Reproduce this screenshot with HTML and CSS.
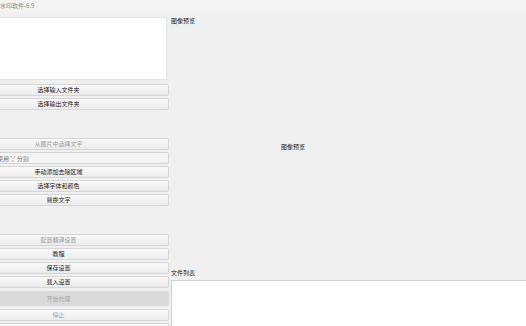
FILE: index.html
```html
<!DOCTYPE html>
<html lang="zh">
<head>
  <meta charset="UTF-8" />
  <title>水印软件-6.9</title>
  <link rel="stylesheet" href="styles.css">
</head>
<body>

  <div id="titlebar">水印软件-6.9</div>

  <div id="main">
    <!-- Left controls -->
    <aside id="controls">
      <div class="log-box"></div>

      <button class="btn first">选择输入文件夹</button>
      <button class="btn">选择输出文件夹</button>

      <button class="btn disabled group">从图片中选择文字</button>
      <input class="field" type="text" value="使用 ';' 分割" />
      <button class="btn">手动添加去除区域</button>
      <button class="btn">选择字体和颜色</button>
      <button class="btn">替换文字</button>

      <button class="btn disabled group">配置翻译设置</button>
      <button class="btn">教程</button>
      <button class="btn">保存设置</button>
      <button class="btn">载入设置</button>
      <button class="btn start" disabled>开始处理</button>
      <button class="btn disabled stop">停止</button>
      <button class="btn disabled last">退出</button>
    </aside>

    <!-- Preview and file list -->
    <section id="content">
      <div class="label">图像预览</div>
      <div class="preview"><span>图像预览</span></div>
      <div class="label">文件列表</div>
      <div class="file-list"></div>
    </section>
  </div>

</body>
</html>
```

FILE: styles.css
```css
/* Reset */
* {
  margin: 0; padding: 0; box-sizing: border-box;
  font-family: 'Noto Sans CJK SC', 'Noto Sans', sans-serif;
}

html, body {
  width: 526px;
  height: 326px;
  overflow: hidden;
  background: #f0f0f0;
  color: #222;
}

/* Title bar */
#titlebar {
  height: 12px;
  line-height: 11px;
  font-size: 6px;
  color: #8a8a8a;
  background: #f3f3f3;
}

#main {
  display: flex;
  height: 314px;
  overflow: hidden;
}

/* Left column */
#controls {
  width: 221px;
  margin-left: -52px;
  display: flex;
  flex-direction: column;
  flex-shrink: 0;
}
.log-box {
  height: 63px;
  margin-top: 5px;
  margin-right: 2px;
  background: #fff;
  border: 1px solid #e2e2e2;
  flex-shrink: 0;
}
.btn, .field {
  height: 12px;
  margin-top: 2px;
  font-size: 6px;
  line-height: 10px;
  border: 1px solid #d6d6d6;
  border-radius: 2px;
  background: linear-gradient(#f9f9f9, #ececec);
  color: #222;
  text-align: center;
  flex-shrink: 0;
}
.btn.first { margin-top: 4px; }
.btn.group { margin-top: 28px; }
.btn.disabled { color: #9a9a9a; }
.btn.start {
  height: 15px;
  margin-top: 3px;
  background: #dadada;
  border-color: #dadada;
  color: #a8a8a8;
}
.btn.stop { margin-top: 3px; }
.btn.last { line-height: 5px; color: #c4c4c4; }
.field {
  text-align: left;
  padding-left: 48px;
  color: #777;
  background: #f3f3f3;
  outline: none;
}

/* Right column */
#content {
  flex: 1;
  display: flex;
  flex-direction: column;
  padding-left: 2px;
  min-width: 0;
}
.label {
  font-size: 6px;
  line-height: 8px;
  height: 8px;
  margin-top: 5px;
  color: #222;
  flex-shrink: 0;
}
.preview {
  flex: 1;
  width: 244px;
  display: flex;
  align-items: center;
  justify-content: center;
  font-size: 6px;
  color: #222;
  padding-top: 3px;
}
.file-list {
  height: 46px;
  margin-top: 3px;
  background: #fff;
  border-top: 1px solid #d2d2d2;
  border-left: 1px solid #d2d2d2;
  flex-shrink: 0;
}
```
